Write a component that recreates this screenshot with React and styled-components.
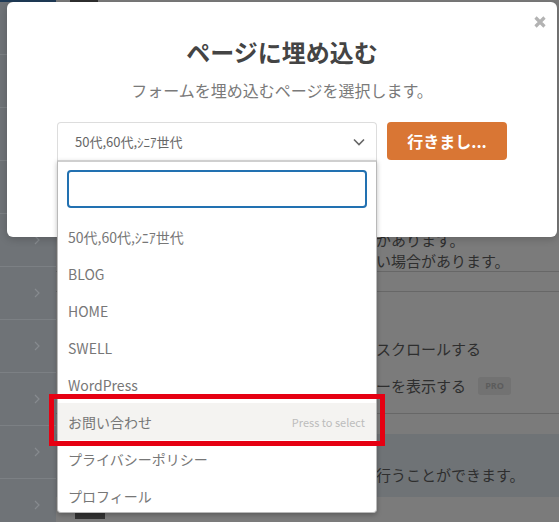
import React from 'react';
import styled, { createGlobalStyle } from 'styled-components';

const pages = [
  '50代,60代,ｼﾆｱ世代',
  'BLOG',
  'HOME',
  'SWELL',
  'WordPress',
  'お問い合わせ',
  'プライバシーポリシー',
  'プロフィール',
];

const App = () => {
  return (
    <>
      <GlobalStyle />
      <Page>
        <Sidebar>
          {Array.from({ length: 10 }).map((_, i) => (
            <SideRow key={i}>
              <svg width="6" height="10" viewBox="0 0 6 10">
                <polyline points="1,1 5,5 1,9" fill="none" stroke="#878b8f" strokeWidth="1.2" />
              </svg>
            </SideRow>
          ))}
        </Sidebar>

        <Main>
          <TopBar>
            <span />
          </TopBar>
          <Section $h={270} $end>
            <Text>があります。</Text>
            <Text>い場合があります。</Text>
          </Section>
          <Section $h={20} />
          <Section $h={122} $pad={38}>
            <OptionRow>
              <Text>スクロールする</Text>
            </OptionRow>
            <OptionRow>
              <Text>ーを表示する</Text>
              <ProBadge>PRO</ProBadge>
            </OptionRow>
          </Section>
          <Notice>
            <Text>行うことができます。</Text>
          </Notice>
          <BottomBar>
            <span />
          </BottomBar>
        </Main>

        <Modal>
          <Close aria-label="close">
            <svg width="12" height="12" viewBox="0 0 12 12">
              <path d="M1.5 1.5 L10.5 10.5 M10.5 1.5 L1.5 10.5" stroke="#b3b3b3" strokeWidth="3.2" />
            </svg>
          </Close>
          <Title>ページに埋め込む</Title>
          <SubTitle>フォームを埋め込むページを選択します。</SubTitle>
          <Controls>
            <SelectWrap>
              <SelectBox>
                <span>50代,60代,ｼﾆｱ世代</span>
                <svg width="12" height="8" viewBox="0 0 12 8">
                  <polyline points="1,1.5 6,6.5 11,1.5" fill="none" stroke="#666" strokeWidth="1.6" />
                </svg>
              </SelectBox>
              <Dropdown>
                <Search type="text" />
                <List>
                  {pages.map((p) => (
                    <Option key={p} $active={p === 'お問い合わせ'}>
                      <span>{p}</span>
                      {p === 'お問い合わせ' && (
                        <>
                          <Hint>Press to select</Hint>
                          <Marker />
                        </>
                      )}
                    </Option>
                  ))}
                </List>
              </Dropdown>
            </SelectWrap>
            <GoButton>行きまし...</GoButton>
          </Controls>
        </Modal>
      </Page>
    </>
  );
};

export default App;

const GlobalStyle = createGlobalStyle`
  html, body {
    margin: 0;
    padding: 0;
  }
  body {
    font-family: 'Noto Sans CJK JP', 'Noto Sans', sans-serif;
    background: #7b7b7b;
  }
`;

const Page = styled.div`
  width: 559px;
  height: 522px;
  position: relative;
  overflow: hidden;
  display: flex;
  background: #7b7b7b;
`;

const Sidebar = styled.aside`
  width: 56px;
  flex-shrink: 0;
  background: #6f7377;
  border-top: 2px solid #1f3b57;
  display: flex;
  flex-direction: column;
`;

const SideRow = styled.div`
  height: 52px;
  flex-shrink: 0;
  border-bottom: 1px solid #7c8084;
  display: flex;
  align-items: center;
  justify-content: flex-end;
  padding-right: 16px;
`;

const Main = styled.main`
  flex: 1;
  min-width: 0;
  display: flex;
  flex-direction: column;
`;

const TopBar = styled.div`
  height: 2px;
  display: flex;
  padding-left: 14px;
  span {
    width: 28px;
    background: #2f2f2f;
  }
`;

const Section = styled.section`
  height: ${(p) => p.$h}px;
  box-sizing: border-box;
  flex-shrink: 0;
  border-bottom: 1px solid #676767;
  display: flex;
  flex-direction: column;
  justify-content: ${(p) => (p.$end ? 'flex-end' : 'flex-start')};
  padding-left: 320px;
  padding-top: ${(p) => p.$pad || 0}px;
`;

const Text = styled.p`
  margin: 0;
  font-size: 15px;
  line-height: 21px;
  color: #2e2e2e;
  white-space: nowrap;
`;

const OptionRow = styled.div`
  height: 37px;
  display: flex;
  align-items: center;
  gap: 12px;
`;

const ProBadge = styled.span`
  display: inline-flex;
  align-items: center;
  justify-content: center;
  width: 33px;
  height: 18px;
  border-radius: 3px;
  background: #727272;
  color: #5c5c5c;
  font-family: 'Open Sans', sans-serif;
  font-size: 9px;
  font-weight: 700;
`;

const Notice = styled.div`
  margin-top: 20px;
  height: 63px;
  box-sizing: border-box;
  flex-shrink: 0;
  background: #6f7376;
  padding: 30px 0 0 320px;
`;

const BottomBar = styled.div`
  margin-top: 14px;
  height: 8px;
  display: flex;
  padding-left: 19px;
  span {
    width: 30px;
    background: #333;
  }
`;

const Modal = styled.div`
  position: absolute;
  left: 7px;
  top: 2px;
  width: 550px;
  height: 235px;
  box-sizing: border-box;
  background: #fff;
  border-radius: 6px;
  box-shadow: 0 2px 8px rgba(0, 0, 0, 0.2);
  display: flex;
  flex-direction: column;
  align-items: center;
  padding-top: 34px;
`;

const Close = styled.button`
  position: absolute;
  top: 14px;
  right: 11px;
  padding: 0;
  border: none;
  background: none;
  display: flex;
`;

const Title = styled.h2`
  margin: 0;
  font-size: 24px;
  line-height: 32px;
  font-weight: 700;
  color: #444;
`;

const SubTitle = styled.p`
  margin: 10px 0 0;
  font-size: 16px;
  line-height: 24px;
  color: #7a7a7a;
`;

const Controls = styled.div`
  margin-top: 20px;
  display: flex;
  gap: 10px;
  align-items: flex-start;
`;

const SelectWrap = styled.div`
  position: relative;
  width: 320px;
`;

const SelectBox = styled.div`
  height: 38px;
  box-sizing: border-box;
  border: 1px solid #ddd;
  border-bottom: none;
  border-radius: 4px 4px 0 0;
  display: flex;
  align-items: center;
  justify-content: space-between;
  padding: 0 11px 0 17px;
  font-size: 13px;
  color: #666;
`;

const Dropdown = styled.div`
  position: absolute;
  top: 100%;
  left: 0;
  width: 320px;
  height: 353px;
  box-sizing: border-box;
  background: #fff;
  border: 1px solid #b9b9b9;
  border-top: 2px solid #cfcfcf;
  border-radius: 0 0 4px 4px;
  box-shadow: 0 2px 5px rgba(0, 0, 0, 0.25);
  z-index: 2;
`;

const Search = styled.input`
  display: block;
  margin: 8px 9px 10px;
  width: 300px;
  height: 38px;
  box-sizing: border-box;
  border: 2px solid #2271b1;
  border-radius: 4px;
  outline: none;
`;

const List = styled.ul`
  list-style: none;
  margin: 0;
  padding: 0;
`;

const Option = styled.li`
  position: relative;
  height: 37px;
  display: flex;
  align-items: center;
  justify-content: space-between;
  padding: 0 11px 0 10px;
  font-size: 14px;
  color: #777;
  background: ${(p) => (p.$active ? '#f4f3f1' : 'transparent')};
`;

const Hint = styled.span`
  font-size: 11px;
  color: #bcbcbc;
`;

const Marker = styled.span`
  position: absolute;
  left: -9px;
  right: -9px;
  top: -9px;
  bottom: -6px;
  border: 5px solid #e60012;
  pointer-events: none;
`;

const GoButton = styled.button`
  width: 120px;
  height: 38px;
  border: none;
  border-radius: 4px;
  background: #d97634;
  color: #fff;
  font-family: inherit;
  font-size: 16px;
  font-weight: 700;
  padding: 0;
`;
